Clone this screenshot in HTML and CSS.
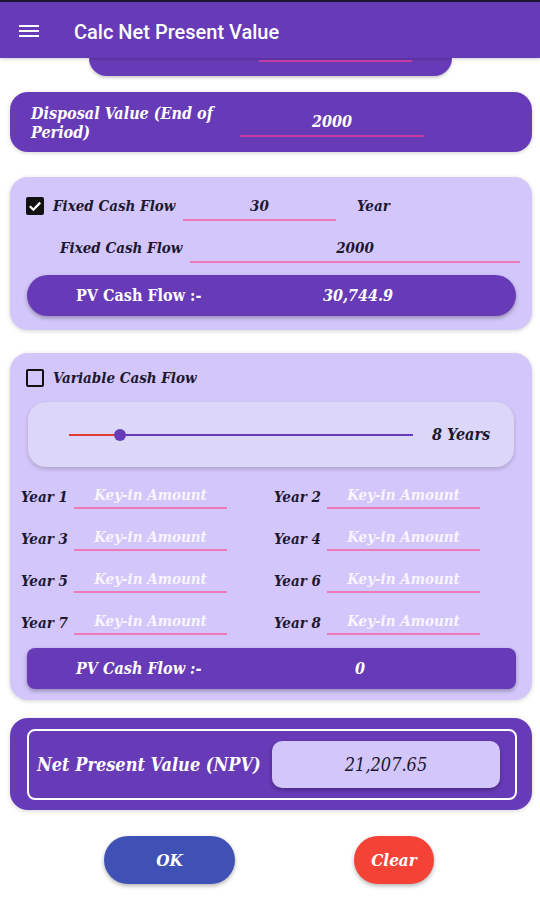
FILE: index.html
```html
<!DOCTYPE html>
<html>
<head>
<meta charset="utf-8">
<link rel="stylesheet" href="styles.css">
</head>
<body>
<header class="appbar">
  <div class="menu"><span></span><span></span><span></span></div>
  <div class="title">Calc Net Present Value</div>
</header>
<main class="content">
  <div class="stub"><div class="stub-line"></div></div>

  <section class="card purple disposal">
    <div class="disp-label">Disposal Value (End of Period)</div>
    <div class="field disp-field">2000</div>
  </section>

  <section class="card lav fixed">
    <div class="row row1">
      <span class="cb checked"><svg viewBox="0 0 18 18" width="18" height="18"><path d="M3.8 9.2 L7.4 12.7 L14.2 5.6" fill="none" stroke="#fff" stroke-width="2.3"/></svg></span>
      <span class="lbl lbl1">Fixed Cash Flow</span>
      <span class="field f30">30</span>
      <span class="lbl year">Year</span>
    </div>
    <div class="row row2">
      <span class="lbl lbl2">Fixed Cash Flow</span>
      <span class="field f2000">2000</span>
    </div>
    <div class="pvbar pill">
      <span class="pv-label upright">PV Cash Flow :-</span>
      <span class="pv-val">30,744.9</span>
    </div>
  </section>

  <section class="card lav variable">
    <div class="row vrow">
      <span class="cb"></span>
      <span class="lbl">Variable Cash Flow</span>
    </div>
    <div class="sliderbox">
      <div class="track">
        <div class="done"></div>
        <div class="thumb"></div>
        <div class="rest"></div>
      </div>
      <span class="lbl years">8 Years</span>
    </div>
    <div class="grid">
      <div class="yr"><span class="lbl ylbl">Year 1</span><span class="field ph">Key-in Amount</span></div>
      <div class="yr"><span class="lbl ylbl">Year 2</span><span class="field ph">Key-in Amount</span></div>
      <div class="yr"><span class="lbl ylbl">Year 3</span><span class="field ph">Key-in Amount</span></div>
      <div class="yr"><span class="lbl ylbl">Year 4</span><span class="field ph">Key-in Amount</span></div>
      <div class="yr"><span class="lbl ylbl">Year 5</span><span class="field ph">Key-in Amount</span></div>
      <div class="yr"><span class="lbl ylbl">Year 6</span><span class="field ph">Key-in Amount</span></div>
      <div class="yr"><span class="lbl ylbl">Year 7</span><span class="field ph">Key-in Amount</span></div>
      <div class="yr"><span class="lbl ylbl">Year 8</span><span class="field ph">Key-in Amount</span></div>
    </div>
    <div class="pvbar rect">
      <span class="pv-label wide">PV Cash Flow :-</span>
      <span class="pv-val">0</span>
    </div>
  </section>

  <section class="card purple npv">
    <div class="npv-inner">
      <span class="npv-label">Net Present Value (NPV)</span>
      <span class="npv-val">21,207.65</span>
    </div>
  </section>

  <div class="buttons">
    <button class="btn ok">OK</button>
    <button class="btn clear">Clear</button>
  </div>
</main>
</body>
</html>
```
FILE: styles.css
```css
* { box-sizing: border-box; }
html, body { margin: 0; padding: 0; }
body {
  width: 540px;
  height: 900px;
  overflow: hidden;
  background: #fff;
  font-family: "DejaVu Serif Condensed", "DejaVu Serif", "Liberation Serif", serif;
  font-stretch: condensed;
}
.appbar {
  height: 58px;
  background: #673ab7;
  border-top: 2px solid #1d1530;
  padding-top: 3px;
  display: flex;
  align-items: center;
  position: relative;
  z-index: 2;
  box-shadow: 0 1px 3px rgba(0,0,0,0.2);
}
.menu {
  width: 20px;
  margin-left: 19px;
  display: flex;
  flex-direction: column;
  gap: 3px;
  margin-top: -2px;
}
.menu span { display: block; height: 2px; background: #fff; }
.title {
  margin-left: 35px;
  color: #fff;
  font-family: Roboto, "Noto Sans", sans-serif;
  font-stretch: normal;
  font-weight: 500;
  font-size: 20px;
}
.content { padding: 0 8px 0 10px; }
.stub {
  margin-left: 79px;
  width: 363px;
  height: 18px;
  background: #673ab7;
  border-radius: 0 0 18px 18px;
  box-shadow: 0 2px 3px rgba(0,0,0,0.2);
  padding-left: 170px;
  padding-top: 2px;
}
.stub-line { width: 153px; height: 2px; background: #c83ea6; }
.card { border-radius: 18px; box-shadow: 0 1px 4px rgba(0,0,0,0.18); }
.purple { background: #673ab7; color: #fff; }
.lav { background: #d3c6fa; }
.lbl { font-weight: bold; font-style: italic; font-size: 15px; color: #1c1830; white-space: nowrap; }
.field {
  display: block;
  border-bottom: 2px solid #ec7ab7;
  text-align: center;
  font-weight: bold;
  font-style: italic;
  font-size: 15px;
  color: #1c1830;
  height: 27px;
  line-height: 24px;
  white-space: nowrap;
}
.disposal {
  margin-top: 16px;
  height: 60px;
  display: flex;
  align-items: center;
  padding-left: 21px;
}
.disp-label {
  width: 209px;
  font-weight: bold;
  font-style: italic;
  font-size: 16px;
  line-height: 19px;
  margin-top: 1px;
}
.disp-field {
  width: 184px;
  color: #fff;
  font-size: 16px;
  border-bottom-color: #c83ea6;
  height: 28px;
  line-height: 26px;
  margin-top: 2px;
}
.fixed {
  margin-top: 25px;
  height: 153px;
  padding-top: 13px;
}
.row { display: flex; align-items: center; height: 32px; }
.cb {
  width: 18px; height: 18px;
  border: 2px solid #111;
  border-radius: 2px;
  margin-left: 16px;
  margin-right: 9px;
  flex: none;
  display: block;
}
.cb.checked { background: #111; border: none; }
.cb svg { display: block; }
.lbl1 { width: 130px; }
.f30 { width: 153px; margin-top: 2px; }
.year { margin-left: 21px; }
.row2 { margin-top: 10px; }
.lbl2 { margin-left: 50px; width: 130px; }
.f2000 { width: 330px; margin-top: 2px; }
.pvbar {
  margin: 11px 0 0 17px;
  width: 489px;
  height: 41px;
  background: #673ab7;
  color: #fff;
  display: flex;
  align-items: center;
  box-shadow: 0 2px 4px rgba(0,0,0,0.3);
  font-weight: bold;
  font-size: 16px;
  padding-left: 49px;
}
.pill { border-radius: 21px; }
.rect { border-radius: 8px; }
.pv-label { width: 247px; font-style: italic; white-space: nowrap; }
.pv-label.upright { font-style: normal; }
.pv-label.wide { width: 279px; }
.pv-val { font-style: italic; }
.variable {
  margin-top: 23px;
  height: 347px;
  padding-top: 9px;
}
.sliderbox {
  margin: 8px 0 0 18px;
  width: 486px;
  height: 65px;
  background: #dcd6f8;
  border-radius: 18px;
  box-shadow: 0 2px 4px rgba(0,0,0,0.18);
  display: flex;
  align-items: center;
}
.track {
  margin-left: 41px;
  width: 344px;
  height: 12px;
  display: flex;
  align-items: center;
}
.done { width: 45px; height: 2px; background: #e53935; }
.thumb { width: 12px; height: 12px; border-radius: 50%; background: #673ab7; flex: none; }
.rest { flex: 1; height: 2px; background: #673ab7; }
.years { margin-left: 19px; font-size: 16px; }
.grid {
  margin: 14px 0 0 11px;
  display: grid;
  grid-template-columns: 253px 253px;
  row-gap: 10px;
}
.yr { display: flex; align-items: center; height: 32px; }
.ylbl { width: 53px; }
.ph { width: 153px; color: #f8f5ff; height: 25px; line-height: 22px; margin-top: -1px; }
.variable .pvbar { margin-top: 9px; }
.npv {
  margin-top: 18px;
  height: 92px;
  padding: 11px 0 0 17px;
}
.npv-inner {
  width: 490px;
  height: 71px;
  border: 2px solid #fff;
  border-radius: 8px;
  display: flex;
  align-items: center;
  padding-left: 8px;
}
.npv-label {
  width: 235px;
  font-weight: bold;
  font-style: italic;
  font-size: 18px;
  white-space: nowrap;
}
.npv-val {
  width: 228px;
  height: 47px;
  background: #d3c6fa;
  border-radius: 10px;
  box-shadow: 0 2px 4px rgba(0,0,0,0.3);
  color: #1c1830;
  display: flex;
  align-items: center;
  justify-content: center;
  font-style: italic;
  font-size: 18px;
}
.buttons {
  margin-top: 26px;
  display: flex;
  height: 48px;
}
.btn {
  border: none;
  height: 48px;
  border-radius: 24px;
  color: #fff;
  font-family: "DejaVu Serif Condensed", "DejaVu Serif", "Liberation Serif", serif;
  font-stretch: condensed;
  font-weight: bold;
  font-style: italic;
  font-size: 17px;
  box-shadow: 0 2px 4px rgba(0,0,0,0.3);
  padding: 0;
}
.ok { background: #3f51b5; width: 131px; margin-left: 94px; }
.clear { background: #f44336; width: 80px; margin-left: 119px; }
```
